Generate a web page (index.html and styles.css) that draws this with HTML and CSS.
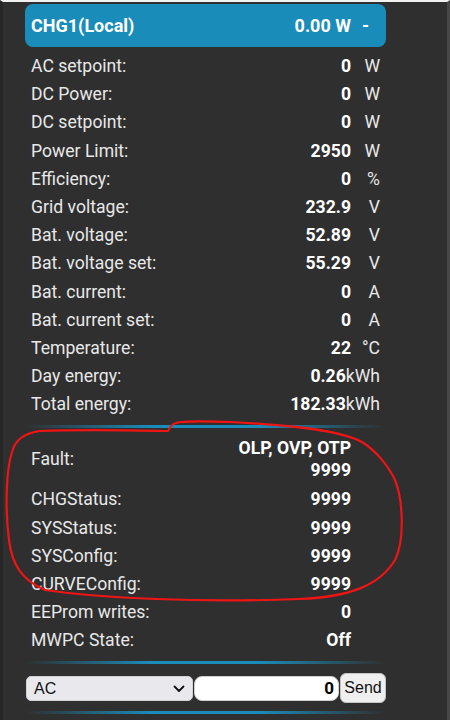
FILE: index.html
```html
<!DOCTYPE html>
<html lang="en">
<head>
    <meta charset="UTF-8">
    <meta name="viewport" content="width=device-width, initial-scale=1.0">
    <title>CHG1 (Local)</title>
    <link rel="stylesheet" href="styles.css">
</head>
<body>
    <div class="card">
        <div class="head line">
            <span>CHG1(Local)</span>
            <span class="val">0.00 W</span>
            <span class="unit">-</span>
        </div>

        <div class="rows">
            <div class="line"><span>AC setpoint:</span><span class="val">0</span><span class="unit">W</span></div>
            <div class="line"><span>DC Power:</span><span class="val">0</span><span class="unit">W</span></div>
            <div class="line"><span>DC setpoint:</span><span class="val">0</span><span class="unit">W</span></div>
            <div class="line"><span>Power Limit:</span><span class="val">2950</span><span class="unit">W</span></div>
            <div class="line"><span>Efficiency:</span><span class="val">0</span><span class="unit">%</span></div>
            <div class="line"><span>Grid voltage:</span><span class="val">232.9</span><span class="unit">V</span></div>
            <div class="line"><span>Bat. voltage:</span><span class="val">52.89</span><span class="unit">V</span></div>
            <div class="line"><span>Bat. voltage set:</span><span class="val">55.29</span><span class="unit">V</span></div>
            <div class="line"><span>Bat. current:</span><span class="val">0</span><span class="unit">A</span></div>
            <div class="line"><span>Bat. current set:</span><span class="val">0</span><span class="unit">A</span></div>
            <div class="line"><span>Temperature:</span><span class="val">22</span><span class="unit">°C</span></div>
            <div class="line"><span>Day energy:</span><span class="val">0.26</span><span class="unit">kWh</span></div>
            <div class="line"><span>Total energy:</span><span class="val">182.33</span><span class="unit">kWh</span></div>
        </div>

        <div class="sep"></div>

        <div class="rows">
            <div class="line fault"><span>Fault:</span><span class="val">OLP, OVP, OTP<br>9999</span><span class="unit"></span></div>
            <div class="line"><span>CHGStatus:</span><span class="val">9999</span><span class="unit"></span></div>
            <div class="line"><span>SYSStatus:</span><span class="val">9999</span><span class="unit"></span></div>
            <div class="line"><span>SYSConfig:</span><span class="val">9999</span><span class="unit"></span></div>
            <div class="line"><span>CURVEConfig:</span><span class="val">9999</span><span class="unit"></span></div>
            <div class="line"><span>EEProm writes:</span><span class="val">0</span><span class="unit"></span></div>
            <div class="line"><span>MWPC State:</span><span class="val">Off</span><span class="unit"></span></div>
        </div>

        <div class="sep"></div>

        <form class="controls">
            <div class="select-wrap">
                <select class="mode">
                    <option>AC</option>
                    <option>DC</option>
                </select>
                <svg class="chev" width="12" height="8" viewBox="0 0 12 8"><path d="M1.5 1.5 L6 6 L10.5 1.5" fill="none" stroke="#111" stroke-width="1.8" stroke-linecap="round" stroke-linejoin="round"/></svg>
            </div>
            <input class="amount" type="text" value="0">
            <button type="button" class="send">Send</button>
        </form>

        <div class="sep"></div>
    </div>

    <!-- red marker drawn over the fault block -->
    <svg class="mark" width="450" height="720" viewBox="0 0 450 720">
        <path d="M168 431 C160 431 90 429 40 431 C25 433 15 440 12 452 C6 470 5 510 9 540 C12 565 22 580 45 590 C100 598 200 603 300 599 C350 597 380 585 395 560 C405 540 403 500 395 480 C388 465 375 450 362 442 C340 430 290 425 230 422 C200 421 182 421 176 423 C172 424 170 427 168 431" fill="none" stroke="#f01414" stroke-width="2.2" stroke-linecap="round"/>
    </svg>
</body>
</html>
```

FILE: styles.css
```css
body {
    margin: 0;
    min-height: 720px;
    position: relative;
    background-color: #2f2f2f;
    border-top: 2px solid #f2f2f2;
    border-left: 3px solid #272727;
    border-right: 3px solid #474747;
    box-sizing: border-box;
    font-family: Roboto, "Liberation Sans", sans-serif;
    color: #e8e8e8;
    overflow: hidden;
}
.card {
    width: 361px;
    margin: 2px 0 0 22px;
}
.line {
    display: grid;
    grid-template-columns: 1fr auto minmax(29px, auto);
    padding: 0 6px;
    font-size: 17.6px;
    line-height: 28.2px;
    align-items: center;
}
.val {
    font-weight: bold;
    color: #fff;
    text-align: right;
}
.unit {
    text-align: right;
}
.head {
    background-color: #1a8cb9;
    border-radius: 8px;
    height: 43px;
    line-height: 43px;
    font-size: 18px;
    font-weight: bold;
    color: #fff;
}
.head .unit {
    text-align: center;
}
.rows {
    margin-top: 5px;
}
.sep + .rows {
    margin-top: 0;
}
.fault {
    padding-top: 4.4px;
    padding-bottom: 4.4px;
}
.fault .val {
    line-height: 22px;
}
.sep {
    height: 3px;
    margin: 6px 0 5px;
    background: linear-gradient(to right, rgba(26,140,185,0), #1a8cb9 35%, #1a8cb9 65%, rgba(26,140,185,0));
}
.controls {
    display: flex;
    align-items: center;
    padding: 4.4px 0 2px;
    margin: 0;
}
.select-wrap {
    position: relative;
    width: 167px;
    margin-left: 1px;
}
.mode {
    appearance: none;
    -webkit-appearance: none;
    width: 100%;
    height: 25px;
    background-color: #e9e8ed;
    border: 1px solid #d2d1d6;
    border-radius: 5px;
    padding: 0 0 0 7px;
    font-family: "Liberation Sans", Arial, sans-serif;
    font-size: 16px;
    color: #111;
}
.chev {
    position: absolute;
    right: 8px;
    top: 9px;
    pointer-events: none;
}
.amount {
    width: 145px;
    height: 25px;
    box-sizing: border-box;
    margin: 0 1px;
    border: 1px solid #d0d0d0;
    border-radius: 8px;
    background: #fff;
    text-align: right;
    padding: 0 4px;
    font-family: Roboto, "Liberation Sans", sans-serif;
    font-size: 17px;
    font-weight: bold;
    color: #000;
}
.send {
    width: 46px;
    height: 30px;
    padding: 0;
    background-color: #efefef;
    border: 1px solid #c4c4c4;
    border-radius: 6px;
    font-family: "Liberation Sans", Arial, sans-serif;
    font-size: 16px;
    color: #111;
}
.mark {
    position: absolute;
    top: -2px;
    left: -3px;
    pointer-events: none;
}
```
